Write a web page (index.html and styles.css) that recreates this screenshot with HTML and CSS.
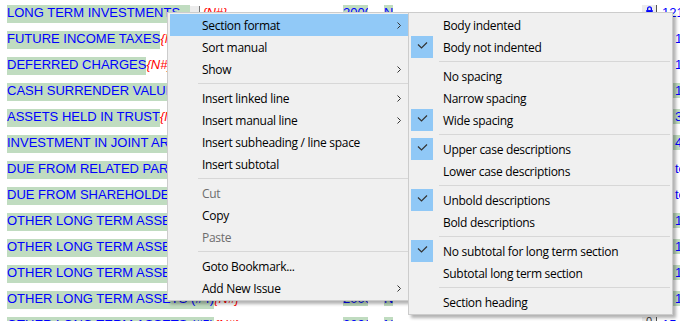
FILE: index.html
```html
<!DOCTYPE html>
<html lang="en">
<head>
    <meta charset="UTF-8">
    <title>Statement sections</title>
    <link rel="stylesheet" href="styles.css">
</head>
<body>
    <div class="sheet">
        <div class="row">
            <div class="desc"><span class="text focus">LONG TERM INVESTMENTS</span><span class="fill"></span><span class="btn"></span><span class="flag">{N#}</span></div>
            <div class="yr"><span>2000</span></div>
            <div class="code"><span>N</span></div>
            <div class="lock"><svg width="14" height="12" viewBox="0 0 14 12"><path d="M5 5V3.5a2 2 0 0 1 4 0V5" fill="none" stroke="#0000ff" stroke-width="1.4"/><rect x="3.5" y="5" width="7" height="6" fill="#0000ff"/></svg></div>
            <div class="amt plain">121,450</div>
        </div>
        <div class="row">
            <div class="desc"><span class="text">FUTURE INCOME TAXES</span><span class="flag">{N#}</span></div>
            <div class="yr"><span>2000</span></div>
            <div class="code"><span>N</span></div>
            <div class="lock"></div>
            <div class="amt white"><span>1,250</span></div>
        </div>
        <div class="row">
            <div class="desc"><span class="text">DEFERRED CHARGES</span><span class="flag">{N#}</span></div>
            <div class="yr"><span>2000</span></div>
            <div class="code"><span>N</span></div>
            <div class="lock"></div>
            <div class="amt white"><span>1,800</span></div>
        </div>
        <div class="row">
            <div class="desc"><span class="text">CASH SURRENDER VALUE OF LIFE INSURANCE</span><span class="flag">{N#}</span></div>
            <div class="yr"><span>2000</span></div>
            <div class="code"><span>N</span></div>
            <div class="lock"></div>
            <div class="amt"><span>1,420</span></div>
        </div>
        <div class="row">
            <div class="desc"><span class="text">ASSETS HELD IN TRUST</span><span class="flag">{N#}</span></div>
            <div class="yr"><span>2000</span></div>
            <div class="code"><span>N</span></div>
            <div class="lock"></div>
            <div class="amt"><span>3,100</span></div>
        </div>
        <div class="row">
            <div class="desc"><span class="text">INVESTMENT IN JOINT ARRANGEMENTS</span><span class="flag">{N#}</span></div>
            <div class="yr"><span>2000</span></div>
            <div class="code"><span>N</span></div>
            <div class="lock"></div>
            <div class="amt"><span>4,000</span></div>
        </div>
        <div class="row">
            <div class="desc"><span class="text">DUE FROM RELATED PARTIES</span><span class="flag">{N#}</span></div>
            <div class="yr"><span>2000</span></div>
            <div class="code"><span>N</span></div>
            <div class="lock"></div>
            <div class="amt white"><span>text</span></div>
        </div>
        <div class="row">
            <div class="desc"><span class="text">DUE FROM SHAREHOLDERS</span><span class="flag">{N#}</span></div>
            <div class="yr"><span>2000</span></div>
            <div class="code"><span>N</span></div>
            <div class="lock"></div>
            <div class="amt white"><span>text</span></div>
        </div>
        <div class="row">
            <div class="desc"><span class="text">OTHER LONG TERM ASSETS (#1)</span><span class="flag">{N#}</span></div>
            <div class="yr"><span>2000</span></div>
            <div class="code"><span>N</span></div>
            <div class="lock"></div>
            <div class="amt"><span>1,000</span></div>
        </div>
        <div class="row">
            <div class="desc"><span class="text">OTHER LONG TERM ASSETS (#2)</span><span class="flag">{N#}</span></div>
            <div class="yr"><span>2000</span></div>
            <div class="code"><span>N</span></div>
            <div class="lock"></div>
            <div class="amt"><span>1,000</span></div>
        </div>
        <div class="row">
            <div class="desc"><span class="text">OTHER LONG TERM ASSETS (#3)</span><span class="flag">{N#}</span></div>
            <div class="yr"><span>2000</span></div>
            <div class="code"><span>N</span></div>
            <div class="lock"></div>
            <div class="amt"><span>1,000</span></div>
        </div>
        <div class="row">
            <div class="desc"><span class="text">OTHER LONG TERM ASSETS (#4)</span><span class="flag">{N#}</span></div>
            <div class="yr"><span>2000</span></div>
            <div class="code"><span>N</span></div>
            <div class="lock"></div>
            <div class="amt"><span>1,000</span></div>
        </div>
        <div class="row">
            <div class="desc"><span class="text">OTHER LONG TERM ASSETS (#5)</span><span class="flag">{N#}</span></div>
            <div class="yr"><span>2000</span></div>
            <div class="code"><span>N</span></div>
            <div class="lock"><span class="zero">0</span></div>
            <div class="amt plain">15,100</div>
        </div>
    </div>

    <div class="menu main">
        <div class="item active">Section format<svg class="arrow" width="4" height="7" viewBox="0 0 4 7"><path d="M0.5 0.5l3 3-3 3" fill="none" stroke="#333" stroke-width="1"/></svg></div>
        <div class="item">Sort manual</div>
        <div class="item">Show<svg class="arrow" width="4" height="7" viewBox="0 0 4 7"><path d="M0.5 0.5l3 3-3 3" fill="none" stroke="#333" stroke-width="1"/></svg></div>
        <div class="sep"></div>
        <div class="item">Insert linked line<svg class="arrow" width="4" height="7" viewBox="0 0 4 7"><path d="M0.5 0.5l3 3-3 3" fill="none" stroke="#333" stroke-width="1"/></svg></div>
        <div class="item">Insert manual line<svg class="arrow" width="4" height="7" viewBox="0 0 4 7"><path d="M0.5 0.5l3 3-3 3" fill="none" stroke="#333" stroke-width="1"/></svg></div>
        <div class="item">Insert subheading / line space</div>
        <div class="item">Insert subtotal</div>
        <div class="sep"></div>
        <div class="item disabled">Cut</div>
        <div class="item">Copy</div>
        <div class="item disabled">Paste</div>
        <div class="sep"></div>
        <div class="item">Goto Bookmark...</div>
        <div class="item">Add New Issue<svg class="arrow" width="4" height="7" viewBox="0 0 4 7"><path d="M0.5 0.5l3 3-3 3" fill="none" stroke="#333" stroke-width="1"/></svg></div>
    </div>

    <div class="menu sub">
        <div class="item"><span class="check"></span>Body indented</div>
        <div class="item"><span class="check on"><svg width="22" height="22" viewBox="0 0 22 22"><path d="M7 8.5l3.5 3.5 5.5-5.5" fill="none" stroke="#333" stroke-width="1.2"/></svg></span>Body not indented</div>
        <div class="sep"></div>
        <div class="item"><span class="check"></span>No spacing</div>
        <div class="item"><span class="check"></span>Narrow spacing</div>
        <div class="item"><span class="check on"><svg width="22" height="22" viewBox="0 0 22 22"><path d="M7 8.5l3.5 3.5 5.5-5.5" fill="none" stroke="#333" stroke-width="1.2"/></svg></span>Wide spacing</div>
        <div class="sep"></div>
        <div class="item"><span class="check on"><svg width="22" height="22" viewBox="0 0 22 22"><path d="M7 8.5l3.5 3.5 5.5-5.5" fill="none" stroke="#333" stroke-width="1.2"/></svg></span>Upper case descriptions</div>
        <div class="item"><span class="check"></span>Lower case descriptions</div>
        <div class="sep"></div>
        <div class="item"><span class="check on"><svg width="22" height="22" viewBox="0 0 22 22"><path d="M7 8.5l3.5 3.5 5.5-5.5" fill="none" stroke="#333" stroke-width="1.2"/></svg></span>Unbold descriptions</div>
        <div class="item"><span class="check"></span>Bold descriptions</div>
        <div class="sep"></div>
        <div class="item"><span class="check on"><svg width="22" height="22" viewBox="0 0 22 22"><path d="M7 8.5l3.5 3.5 5.5-5.5" fill="none" stroke="#333" stroke-width="1.2"/></svg></span>No subtotal for long term section</div>
        <div class="item"><span class="check"></span>Subtotal long term section</div>
        <div class="sep"></div>
        <div class="item"><span class="check"></span>Section heading</div>
    </div>
</body>
</html>
```

FILE: styles.css
```css
:root {
    --ink: #0000ff;
    --band: #c0dcc0;
    --flag: #ff0000;
    --menu: #f0f0f0;
    --hover: #91c9f7;
}
* { box-sizing: border-box; margin: 0; padding: 0; }
body {
    width: 680px; height: 321px; overflow: hidden;
    background: #fff; position: relative;
    font-family: "Liberation Sans", Arial, sans-serif;
}

/* sheet behind the menus */
.sheet { display: flex; flex-direction: column; gap: 11px; padding: 5px 0 0 7px; }
.row {
    display: grid; grid-template-columns: 336px 41px 258px 20px 60px;
    height: 15px; font-size: 13px; line-height: 15px; color: var(--ink);
    white-space: nowrap;
}
.desc { display: flex; overflow: hidden; }
.text { background: var(--band); }
.focus { outline: 1px solid var(--ink); }
.fill { width: 10px; background: var(--band); }
.btn { width: 10px; height: 8px; margin-top: 1px; background: #ececec; border-right: 1px solid #777; margin-right: 2px; }
.flag { color: var(--flag); font-style: italic; }
.yr span, .code span { background: var(--band); display: inline-block; }
.yr span { width: 25px; overflow: hidden; }
.lock { display: flex; align-items: flex-start; border-right: 1px solid #555; margin-right: 5px; height: 8px; background: #ececec; width: 15px; }
.lock svg { margin-left: 1px; }
.zero { font-size: 11px; line-height: 9px; padding-left: 4px; color: #333; }
.amt span { margin-left: 11px; padding-left: 2px; background: var(--band); }
.amt.white span { background: none; }

/* context menus */
.menu {
    position: absolute; top: 12px;
    background: var(--menu); border: 1px solid #ccc;
    padding: 1px 2px;
    box-shadow: 3px 3px 3px rgba(0,0,0,0.3);
    font-family: "Open Sans", "Noto Sans", sans-serif;
    font-size: 12px; letter-spacing: -0.3px; color: #000;
}
.main { left: 167px; width: 245px; }
.sub { left: 408px; width: 265px; }
.item { display: flex; align-items: center; height: 22px; white-space: nowrap; }
.main .item { padding: 0 8px 0 32px; }
.item.active { background: var(--hover); }
.item.disabled { color: #6d6d6d; }
.arrow { margin-left: auto; }
.sep { height: 1px; background: #d7d7d7; margin: 3px 0 3px 28px; }
.check { width: 22px; height: 22px; margin-right: 10px; flex: none; }
.check.on { background: #90c8f6; }
.check svg { display: block; }
```
